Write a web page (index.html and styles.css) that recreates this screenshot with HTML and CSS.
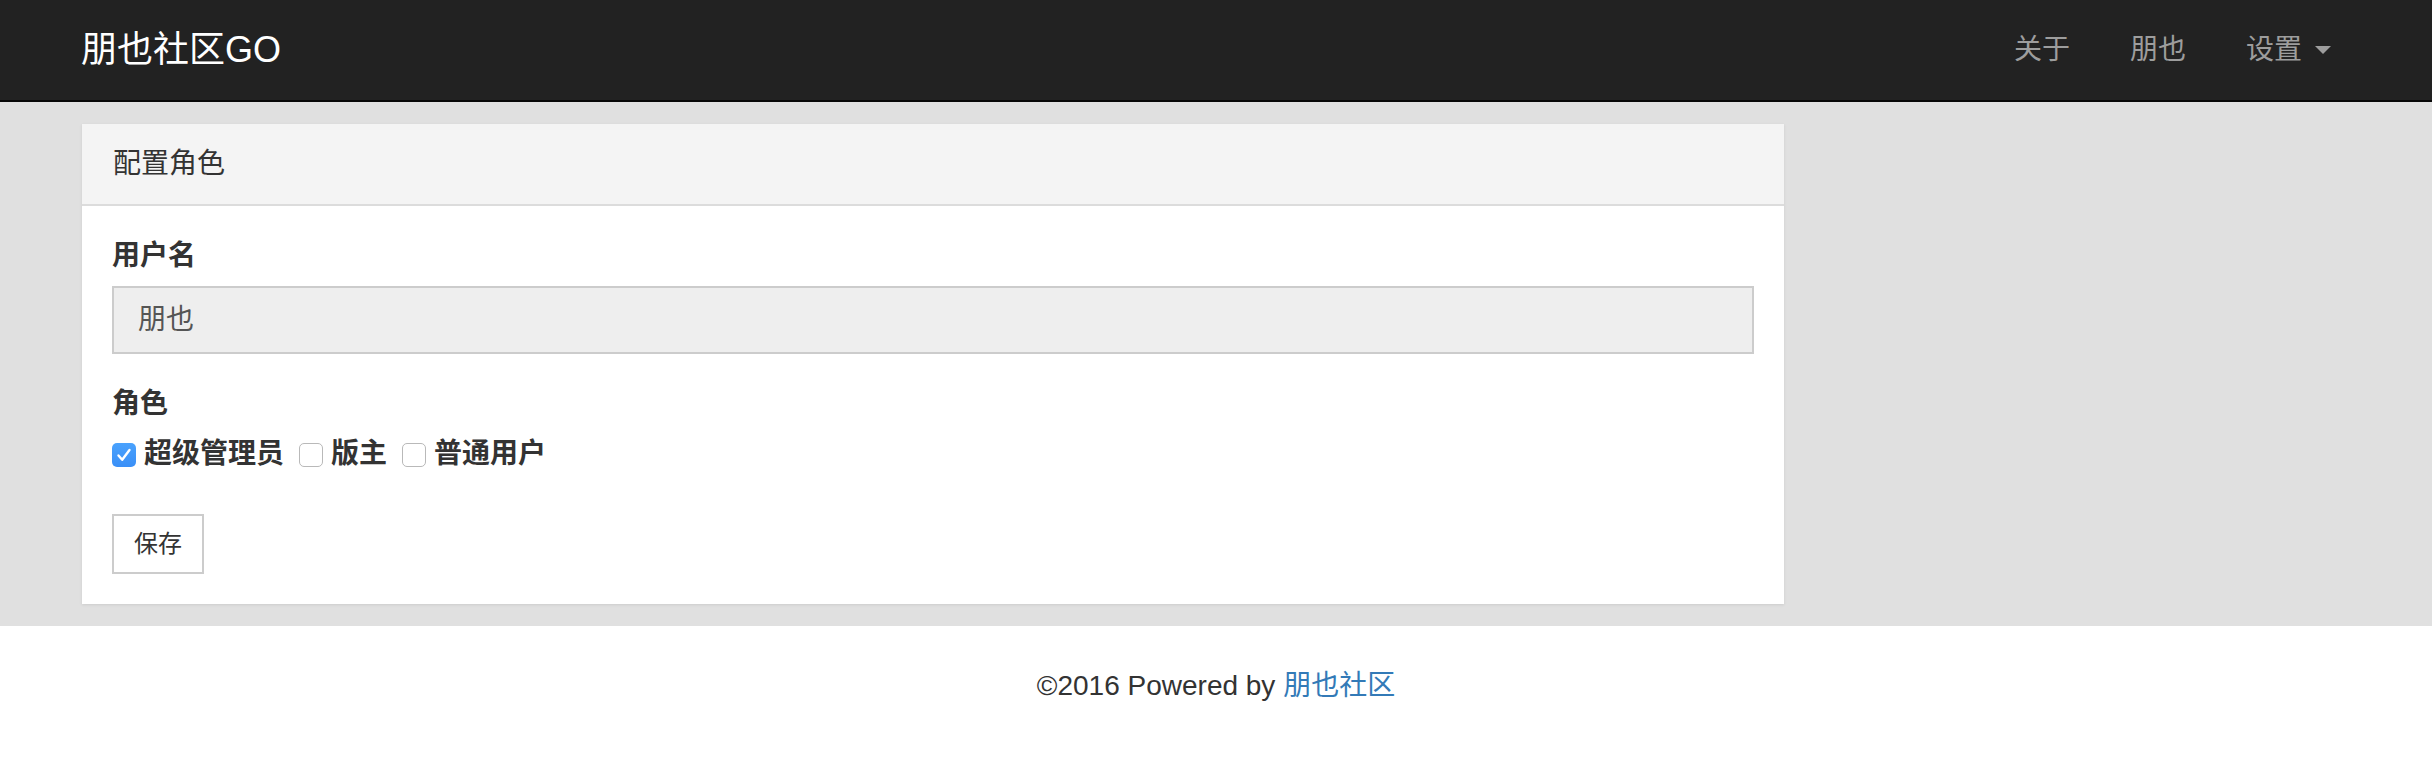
FILE: index.html
```html
<!DOCTYPE html>
<html lang="zh-CN">
<head>
<meta charset="utf-8">
<title>配置角色 - 朋也社区GO</title>
<link rel="stylesheet" href="styles.css">
</head>
<body>
<nav class="navbar">
  <a class="brand" href="#">朋也社区GO</a>
  <ul class="nav-right">
    <li><a href="#">关于</a></li>
    <li><a href="#">朋也</a></li>
    <li><a href="#">设置<span class="caret"></span></a></li>
  </ul>
</nav>
<main class="main">
  <section class="panel">
    <div class="panel-heading">配置角色</div>
    <form class="panel-body">
      <div class="form-group">
        <label class="control-label">用户名</label>
        <div class="form-control">朋也</div>
      </div>
      <div class="form-group roles">
        <label class="control-label">角色</label>
        <div class="checks">
          <label class="check"><span class="box checked"><svg viewBox="0 0 24 24" width="24" height="24"><path d="M6.5 12.5 L10.2 16.8 L17.5 7" fill="none" stroke="#fff" stroke-width="2.4" stroke-linecap="round" stroke-linejoin="round"/></svg></span>超级管理员</label>
          <label class="check"><span class="box"></span>版主</label>
          <label class="check"><span class="box"></span>普通用户</label>
        </div>
      </div>
      <button type="button" class="btn">保存</button>
    </form>
  </section>
</main>
<footer class="footer">©2016 Powered by <a href="#">朋也社区</a></footer>
</body>
</html>
```
FILE: styles.css
```css
* { box-sizing: border-box; }
html, body { margin: 0; padding: 0; }
body {
  font-family: "Liberation Sans", "Noto Sans CJK SC", sans-serif;
  font-size: 28px;
  line-height: 40px;
  color: #333;
  background: #fff;
}
a { text-decoration: none; }

.navbar {
  height: 102px;
  background: #222;
  border-bottom: 2px solid #080808;
  display: flex;
  align-items: center;
  justify-content: space-between;
  padding: 0 71px 0 81px;
}
.brand {
  color: #fff;
  font-size: 36px;
  line-height: 40px;
}
.nav-right {
  list-style: none;
  margin: 0;
  padding: 0;
  display: flex;
}
.nav-right a {
  display: flex;
  align-items: center;
  padding: 30px;
  color: #9d9d9d;
  font-size: 28px;
  line-height: 40px;
}
.caret {
  display: inline-block;
  width: 0;
  height: 0;
  margin-left: 13px;
  border-top: 8px solid #9d9d9d;
  border-left: 8px solid transparent;
  border-right: 8px solid transparent;
}

.main {
  background: #e0e0e0;
  padding: 22px 0 22px 82px;
}
.panel {
  width: 1702px;
  background: #fff;
  box-shadow: 0 1px 3px rgba(0,0,0,0.09);
}
.panel-heading {
  background: #f4f4f4;
  border-bottom: 2px solid #dcdcdc;
  padding: 20px 31px;
  height: 82px;
  color: #333;
}
.panel-body {
  margin: 0;
  padding: 30px;
}
.form-group { margin-bottom: 30px; }
.form-group.roles { margin-bottom: 40px; }
.control-label {
  display: block;
  font-weight: bold;
  margin-bottom: 10px;
}
.form-control {
  height: 68px;
  border: 2px solid #ccc;
  background: #eee;
  padding: 12px 24px;
  color: #555;
}
.checks {
  display: flex;
  align-items: center;
  height: 40px;
}
.check {
  display: flex;
  align-items: center;
  font-weight: bold;
  margin-right: 15px;
}
.box {
  width: 24px;
  height: 24px;
  border-radius: 5px;
  border: 1px solid #b9b9b9;
  background: #fff;
  margin-right: 8px;
  margin-top: 2px;
  display: flex;
}
.box.checked {
  border: none;
  background: linear-gradient(#4aa2fd, #3a8ff7);
}
.btn {
  display: block;
  font-family: inherit;
  font-size: 24px;
  line-height: 36px;
  height: 60px;
  padding: 10px 20px;
  border: 2px solid #ccc;
  background: #fff;
  color: #333;
  border-radius: 0;
}

.footer {
  text-align: center;
  padding: 40px 0;
  color: #333;
}
.footer a { color: #337ab7; }
```
